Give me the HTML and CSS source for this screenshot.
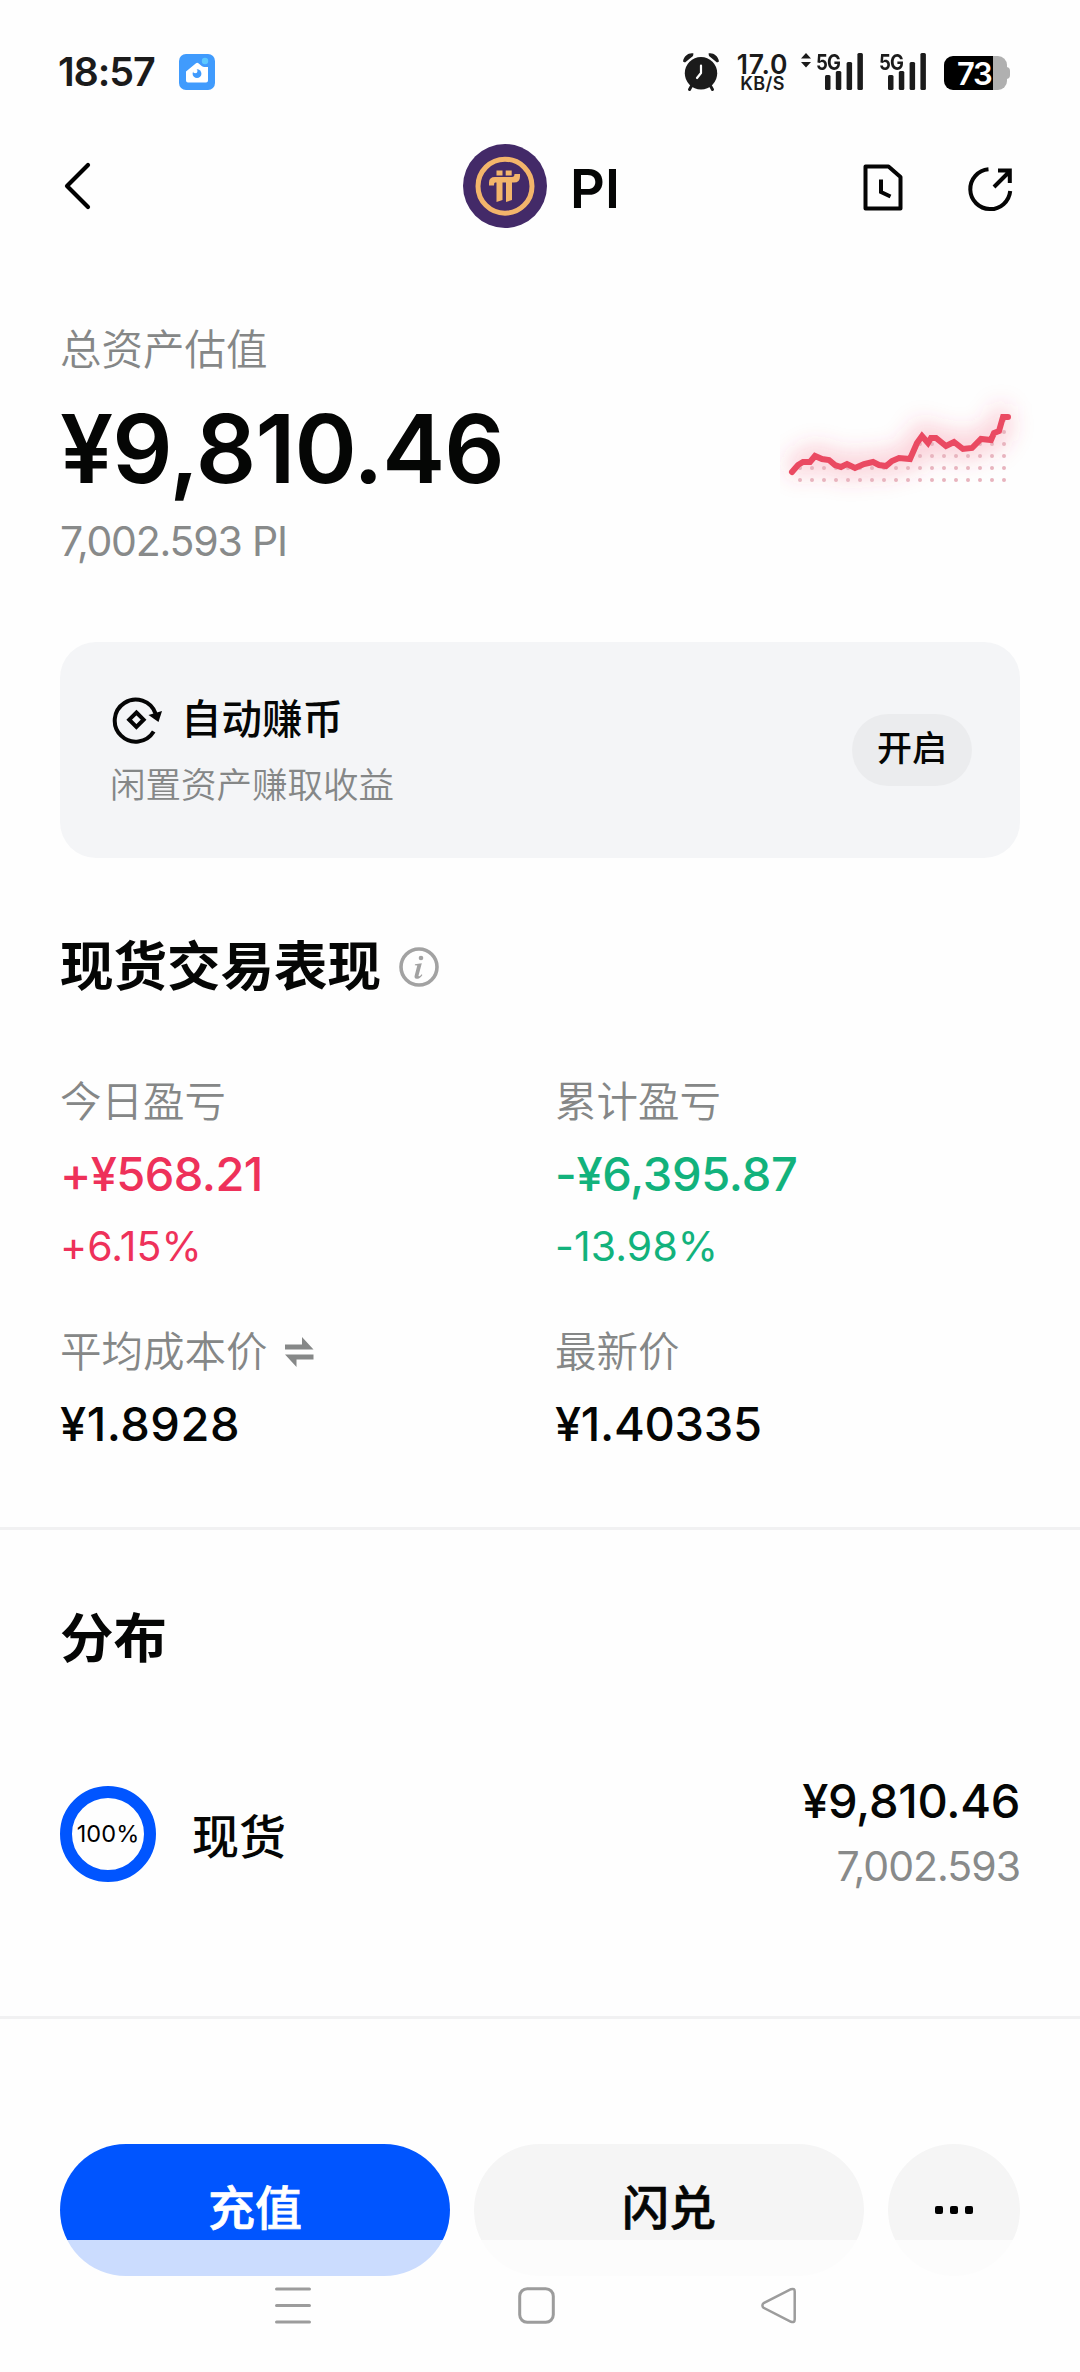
FILE: index.html
```html
<!DOCTYPE html>
<html lang="zh-CN">
<head>
<meta charset="utf-8">
<title>PI</title>
<link rel="stylesheet" href="styles.css">
</head>
<body>
<div class="screen">
  <header class="status">
    <div class="status-left">
      <span class="clock">18:57</span>
      <svg class="app-badge" width="36" height="36" viewBox="0 0 36 36">
        <rect width="36" height="36" rx="7" fill="#409bfd"/>
        <path d="M7 17.5 17 9.3q1.2-.9 2.4 0l3.6 2.9q1 .8 2.200.8H29v13.500q0 2-2 2H9q-2 0-2-2Z" fill="#fff"/>
        <circle cx="26" cy="7" r="3.200" fill="#5cc8ff"/>
        <circle cx="18" cy="19.700" r="4.400" fill="#409bfd"/>
        <circle cx="16.200" cy="17" r="2.300" fill="#fff"/>
      </svg>
    </div>
    <div class="status-right">
      <svg class="alarm" width="38" height="40" viewBox="0 0 38 40">
        <g fill="#1b1b1b">
          <circle cx="19" cy="21.300" r="16.200"/>
          <path d="M1 9.500C2 3.500 7 .5 11.500 1.500L11 4 3 10.500ZM37 9.500C36 3.500 31 .5 26.500 1.500L27 4 35 10.500Z"/>
        </g>
        <path d="M10 33 7.500 37.500M28 33 30.500 37.500" stroke="#1b1b1b" stroke-width="3" stroke-linecap="round"/>
        <path d="M19 13.500V21l-4 5" stroke="#fff" stroke-width="2.200" fill="none" stroke-linecap="round" stroke-linejoin="round"/>
      </svg>
      <div class="speed"><span class="speed-value">17.0</span><span class="speed-unit">KB/S</span></div>
      <div class="signal signal-data">
        <svg class="updown" width="10" height="15" viewBox="0 0 10 15"><path d="M5 0 10 5.500H0ZM5 14.500 0 9H10Z" fill="#1b1b1b"/></svg>
        <span class="net">5G</span>
        <svg class="bars" width="38" height="37" viewBox="0 0 38 37" fill="#1b1b1b"><rect x="0" y="22" width="5.500" height="15" rx="1.500"/><rect x="10.800" y="18" width="5.500" height="19" rx="1.500"/><rect x="21.600" y="9" width="5.500" height="28" rx="1.500"/><rect x="32.400" y="0" width="5.500" height="37" rx="1.500"/></svg>
      </div>
      <div class="signal">
        <span class="net">5G</span>
        <svg class="bars" width="38" height="37" viewBox="0 0 38 37" fill="#1b1b1b"><rect x="0" y="22" width="5.500" height="15" rx="1.500"/><rect x="10.800" y="18" width="5.500" height="19" rx="1.500"/><rect x="21.600" y="9" width="5.500" height="28" rx="1.500"/><rect x="32.400" y="0" width="5.500" height="37" rx="1.500"/></svg>
      </div>
      <div class="battery"><span class="battery-level">73</span></div>
    </div>
  </header>

  <nav class="topbar">
    <svg class="back" width="30" height="50" viewBox="0 0 30 50"><path d="M26 4 5 25 26 46" fill="none" stroke="#000" stroke-width="4.200" stroke-linecap="round" stroke-linejoin="round"/></svg>
    <div class="coin">
      <svg width="84" height="84" viewBox="0 0 84 84">
        <circle cx="42" cy="42" r="42" fill="#432a68"/>
        <circle cx="42" cy="42.200" r="27" fill="none" stroke="#f3b56b" stroke-width="5"/>
        <g fill="#f3b56b">
          <rect x="33.500" y="26.500" width="6" height="5"/>
          <rect x="42.700" y="26.500" width="6" height="5"/>
          <path d="M26 41.500V38.500Q26 33 32 33H49Q51.500 33 51.500 30H57V32.500Q57 38.500 51 38.500H49V56L43 58V38.500H39.500V56L33.500 58V38.500H32Q31 38.500 31 41.500Z"/>
        </g>
      </svg>
      <h1 class="coin-name">PI</h1>
    </div>
    <div class="top-actions">
      <svg width="40" height="48" viewBox="0 0 40 48" fill="none" stroke="#050505" stroke-width="4">
        <path d="M2.500 2.500H25.500L37.500 13V44.500H2.500Z" stroke-linejoin="round"/>
        <path d="M18 15.500V28L27.500 32.500"/>
      </svg>
      <svg width="46" height="48" viewBox="0 0 46 48" fill="none" stroke="#050505" stroke-width="4">
        <path d="M20.500 5.200A20 20 0 1 0 42.200 27"/>
        <path d="M26 23 41.500 7.500M30 6.500H41.800V19"/>
      </svg>
    </div>
  </nav>

  <section class="summary">
    <div class="summary-text">
      <p class="label">总资产估值</p>
      <p class="total">¥9,810.46</p>
      <p class="amount">7,002.593 PI</p>
    </div>
    <svg class="spark" width="260" height="130" viewBox="0 0 260 130">
      <defs>
        <pattern id="dots" x="2" y="-2" width="12" height="12" patternUnits="userSpaceOnUse"><circle cx="6" cy="6" r="2" fill="#e8b4be"/></pattern>
        <clipPath id="under"><path d="M12 92 18 85 23 82 30 82 35 76 42 79 49 80 55 85 61 87 67 84 75 88 84 84 93 82 99 85 106 86 112 81 119 78 130 79 137 63 142 56 148 63 151 58 156 58 166 66 174 62 183 69 192 68 201 59 211 60 214 53 219 51 223 37 228 37V104H12Z"/></clipPath>
        <filter id="soft" filterUnits="userSpaceOnUse" x="0" y="0" width="260" height="130"><feGaussianBlur stdDeviation="11"/></filter>
      </defs>
      <path d="M12 92 18 85 23 82 30 82 35 76 42 79 49 80 55 85 61 87 67 84 75 88 84 84 93 82 99 85 106 86 112 81 119 78 130 79 137 63 142 56 148 63 151 58 156 58 166 66 174 62 183 69 192 68 201 59 211 60 214 53 219 51 223 37 228 37" fill="none" stroke="#f2405c" stroke-opacity=".24" stroke-width="22" filter="url(#soft)"/>
      <rect width="260" height="130" fill="url(#dots)" clip-path="url(#under)"/>
      <path d="M12 92 18 85 23 82 30 82 35 76 42 79 49 80 55 85 61 87 67 84 75 88 84 84 93 82 99 85 106 86 112 81 119 78 130 79 137 63 142 56 148 63 151 58 156 58 166 66 174 62 183 69 192 68 201 59 211 60 214 53 219 51 223 37 228 37" fill="none" stroke="#ea4a62" stroke-width="6" stroke-linecap="round"/>
    </svg>
  </section>

  <section class="earn">
    <div class="earn-text">
      <div class="earn-title">
        <svg width="51" height="50" viewBox="0 0 51 50" fill="none" stroke="#050505" stroke-width="4">
          <path d="M41.700 36.500A21 21 0 1 1 43.500 18.500"/>
          <path d="M24.400 17.500 31.600 24.700 24.400 31.900 17.200 24.700Z"/>
          <path d="M36.500 20 50 16 46.500 27Z" fill="#050505" stroke="none"/>
        </svg>
        <span>自动赚币</span>
      </div>
      <p class="earn-note">闲置资产赚取收益</p>
    </div>
    <button class="earn-open">开启</button>
  </section>

  <section class="perf">
    <h2 class="heading">现货交易表现
      <svg class="info" width="40" height="40" viewBox="0 0 40 40"><circle cx="20" cy="20" r="18" fill="none" stroke="#a2a2a2" stroke-width="3.600"/><circle cx="22" cy="11" r="2.300" fill="#a2a2a2"/><path d="M16 17.200 22.800 16.200 19.600 28.200Q19.200 29.800 20.500 29.200 21.600 28.500 22.600 27.200L23.400 27.900Q20.800 31.800 17.600 31.800 14.900 31.600 15.700 28.500L18.300 18.500 15.800 18.200Z" fill="#a2a2a2"/></svg>
    </h2>
    <div class="stats">
      <div class="stat up">
        <p class="label">今日盈亏</p>
        <p class="value gain">+¥568.21</p>
        <p class="rate">+6.15%</p>
      </div>
      <div class="stat down">
        <p class="label">累计盈亏</p>
        <p class="value loss">-¥6,395.87</p>
        <p class="rate">-13.98%</p>
      </div>
      <div class="stat">
        <p class="label">平均成本价
          <svg class="swap" width="29" height="30" viewBox="0 0 29 30" fill="#868888"><path d="M0 7.500H17V0L28.500 12.500H0ZM28.500 22.500H11.500V30L0 17.500H28.500Z"/></svg>
        </p>
        <p class="value cost">¥1.8928</p>
      </div>
      <div class="stat">
        <p class="label">最新价</p>
        <p class="value last">¥1.40335</p>
      </div>
    </div>
  </section>

  <section class="spread">
    <h2 class="heading">分布</h2>
    <div class="holding">
      <div class="ring">100%</div>
      <span class="holding-name">现货</span>
      <div class="holding-values">
        <p class="value sum">¥9,810.46</p>
        <p class="units">7,002.593</p>
      </div>
    </div>
  </section>

  <footer class="actions">
    <button class="btn primary">充值</button>
    <button class="btn">闪兑</button>
    <button class="btn more"><i></i><i></i><i></i></button>
  </footer>

  <div class="sysnav">
    <svg width="36" height="37" viewBox="0 0 36 37" stroke="#9c9c9c" stroke-width="3.200" stroke-linecap="round"><path d="M1.600 2H34.400M1.600 18.500H34.400M1.600 35H34.400"/></svg>
    <svg width="37" height="37" viewBox="0 0 37 37"><rect x="1.700" y="1.700" width="33.600" height="33.600" rx="7.500" fill="none" stroke="#9c9c9c" stroke-width="3"/></svg>
    <svg width="36" height="37" viewBox="0 0 36 37"><path d="M2.600 16.200 30 2.200Q33.700 1 33.700 4.500V32.500Q33.700 36 30 34.800L2.600 20.800Q.2 18.500 2.600 16.200Z" fill="none" stroke="#9c9c9c" stroke-width="2.500"/></svg>
  </div>
</div>
</body>
</html>
```
FILE: styles.css
```css
* { box-sizing: border-box; }

body {
  margin: 0;
  background: #fff;
  font-family: Inter, "Noto Sans CJK SC", sans-serif;
  color: #050605;
}

p, h1, h2 { margin: 0; }
svg { display: block; flex: none; }
button { border: 0; padding: 0; font: inherit; color: inherit; }

.screen {
  position: relative;
  width: 1080px;
  height: 2372px;
  overflow: hidden;
  background: #fefefe;
  display: flex;
  flex-direction: column;
}

/* Status bar */
.status {
  height: 136px;
  padding: 48px 70px 0 58px;
  display: flex;
  justify-content: space-between;
  align-items: flex-start;
  color: #1b1b1b;
}
.status-left { display: flex; align-items: center; height: 48px; }
.clock { width: 121px; font-size: 39.5px; line-height: 48px; font-weight: 600; letter-spacing: -1.1px; }
.status-right { display: flex; height: 48px; padding-top: 4px; }
.alarm { margin-right: 17px; }
.speed { width: 51px; display: flex; flex-direction: column; align-items: center; font-weight: 600; }
.speed-value { font-size: 26.5px; line-height: 24px; letter-spacing: .8px; }
.speed-unit { font-size: 18px; line-height: 15px; letter-spacing: .4px; }
.signal { position: relative; width: 47px; margin-left: 16px; display: flex; justify-content: flex-end; padding-top: 1px; }
.signal-data { width: 62px; margin-left: 13px; }
.net { position: absolute; right: 23px; top: -1px; font-size: 21.5px; line-height: 22px; font-weight: 700; letter-spacing: -.8px; transform: scaleX(.86); transform-origin: right; }
.updown { margin-right: 14px; }
.battery {
  position: relative;
  width: 63px;
  height: 34px;
  margin: 4px 3px 0 18px;
  border-radius: 9px;
  background: linear-gradient(90deg, #000 49px, #b0b0b0 49px);
}
.battery::after {
  content: "";
  position: absolute;
  right: -3px;
  top: 11px;
  width: 4px;
  height: 12px;
  border-radius: 0 4px 4px 0;
  background: #b0b0b0;
}
.battery-level { display: block; padding-left: 13px; font-size: 31px; line-height: 35px; font-weight: 600; letter-spacing: -1.3px; color: #fff; }

/* Title bar */
.topbar { height: 100px; padding: 0 66px 0 62px; display: grid; grid-template-columns: 1fr auto 1fr; align-items: center; }
.coin { display: flex; align-items: center; gap: 23px; padding-left: 7px; }
.coin-name { font-size: 54px; line-height: 60px; font-weight: 600; padding-top: 5px; }
.top-actions { display: flex; justify-content: flex-end; gap: 65px; padding-top: 3px; }

/* Balance */
.summary { display: flex; justify-content: space-between; padding: 82px 40px 0 60px; height: 406px; }
.label { display: flex; align-items: center; gap: 17px; height: 60px; padding-top: 3px; font-size: 41.5px; line-height: 60px; font-weight: 350; color: #858787; white-space: nowrap; }
.total { font-size: 94.5px; line-height: 142px; font-weight: 600; letter-spacing: -.95px; }
.amount { font-size: 41px; line-height: 42px; color: #888a8a; letter-spacing: -1.2px; }
.spark { margin-top: 62px; }

/* Auto earn */
.earn {
  margin: 0 60px;
  height: 216px;
  padding: 0 48px 0 50px;
  border-radius: 36px;
  background: #f4f5f7;
  display: flex;
  justify-content: space-between;
  align-items: center;
}
.earn-text { padding-top: 12px; }
.earn-title { display: flex; align-items: center; gap: 20px; height: 60px; padding-left: 2px; font-size: 40.5px; font-weight: 500; }
.earn-title span { line-height: 60px; margin-left: -2px; }
.earn-note { line-height: 72px; font-size: 35.5px; font-weight: 350; color: #858787; }
.earn-open { width: 120px; height: 72px; border-radius: 36px; background: #ebecee; font-size: 35px; font-weight: 500; line-height: 68px; padding-bottom: 4px; }

/* Spot performance */
.heading { display: flex; align-items: center; gap: 18px; height: 60px; padding-top: 4px; font-size: 53.500px; line-height: 60px; font-weight: 600; }
.perf { padding: 77px 60px 0; height: 672px; border-bottom: 3px solid #f1f1f2; }
.stats { margin-top: 75px; display: grid; grid-template-columns: 495px 1fr; row-gap: 44px; }
.value { margin-top: 14px; font-size: 47px; line-height: 60px; font-weight: 500; letter-spacing: -.3px; }
.rate { margin-top: 12px; font-size: 41px; line-height: 60px; letter-spacing: .1px; }
.gain { letter-spacing: -.6px; }
.cost { letter-spacing: .5px; }
.up .value, .up .rate { color: #ee315a; }
.down .value, .down .rate { color: #12b27c; }

/* Distribution */
.spread { padding: 77px 60px 0; height: 489px; border-bottom: 3px solid #f1f1f2; }
.holding { margin-top: 104px; height: 125px; display: flex; align-items: center; }
.ring { width: 96px; height: 96px; border: 12px solid #0055ff; border-radius: 50%; display: flex; align-items: center; justify-content: center; font-size: 23.5px; letter-spacing: .1px; color: #000; }
.holding-name { margin-left: 36px; font-size: 47px; font-weight: 500; }
.holding-values { margin-left: auto; text-align: right; }
.holding-values .value { margin: 0; }
.units { margin-top: 5px; font-size: 41px; line-height: 60px; letter-spacing: -1px; color: #888a8a; }

/* Bottom actions */
.actions { margin-top: 125px; padding: 0 60px; display: flex; gap: 24px; }
.btn { width: 390px; height: 132px; border-radius: 66px; background: #f5f5f5; font-size: 47px; font-weight: 500; line-height: 128px; padding-bottom: 4px; -webkit-text-stroke: .7px currentColor; }
.primary { background: #0055ff; color: #fff; }
.more { width: 132px; padding: 0; display: flex; align-items: center; justify-content: center; gap: 7px; }
.more i { width: 8px; height: 8px; border-radius: 2px; background: #000; }

/* Translucent system navigation covering the end of the page */
.sysnav {
  position: absolute;
  left: 0;
  right: 0;
  bottom: 0;
  height: 132px;
  padding: 47px 283px 0 275px;
  display: flex;
  justify-content: space-between;
  background: rgba(254, 254, 254, .8);
}
```
